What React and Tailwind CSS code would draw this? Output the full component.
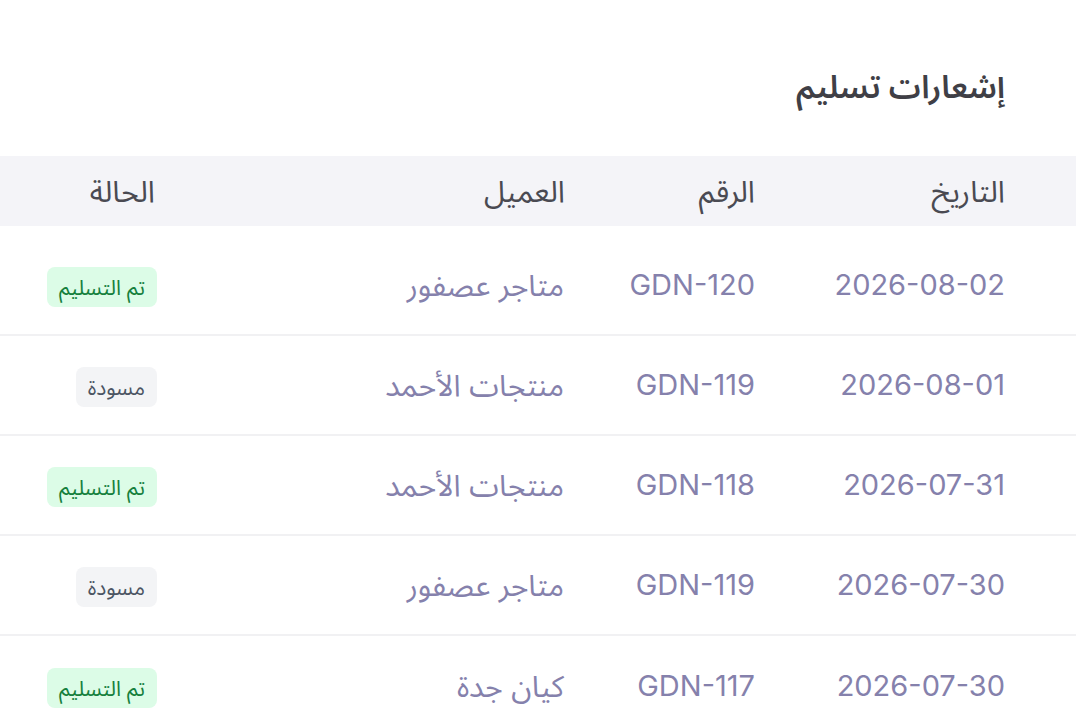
import React from 'react';

const rows = [
  { date: '2026-08-02', no: 'GDN-120', customer: 'متاجر عصفور', status: 'delivered' },
  { date: '2026-08-01', no: 'GDN-119', customer: 'منتجات الأحمد', status: 'draft' },
  { date: '2026-07-31', no: 'GDN-118', customer: 'منتجات الأحمد', status: 'delivered' },
  { date: '2026-07-30', no: 'GDN-119', customer: 'متاجر عصفور', status: 'draft' },
  { date: '2026-07-30', no: 'GDN-117', customer: 'كيان جدة', status: 'delivered' },
];

const font = { fontFamily: 'Inter, "Noto Sans Arabic", "Noto Sans", "DejaVu Sans", sans-serif' };

const StatusBadge = ({ status }) =>
  status === 'delivered' ? (
    <span className="inline-flex items-center h-[40px] px-[12px] rounded-lg bg-[#dcfce7] text-[#15803d] text-[21px]">
      تم التسليم
    </span>
  ) : (
    <span className="inline-flex items-center h-[40px] px-[12px] rounded-lg bg-[#f3f4f6] text-[#4b5563] text-[21px]">
      مسودة
    </span>
  );

const App = () => {
  return (
    <div dir="rtl" className="min-h-screen bg-white" style={font}>
      <h1 className="pt-[60px] pb-[42px] pr-[71px] text-[32px] font-semibold text-[#3f3f46] leading-[54px]">
        إشعارات تسليم
      </h1>

      {/* header */}
      <div className="flex h-[70px] items-center bg-[#f4f4f8] text-[30px] text-[#4a4a52]">
        <div className="w-[296px] pr-[71px]">التاريخ</div>
        <div className="w-[190px] pr-[25px]">الرقم</div>
        <div className="w-[410px] pr-[25px]">العميل</div>
        <div className="flex-1 pr-[25px]">الحالة</div>
      </div>

      <div className="pt-[10px]">
        {rows.map((r, i) => (
          <div
            key={i}
            className={`flex h-[100px] items-center text-[29px] text-[#8581ac] ${
              i < rows.length - 1 ? 'border-b-2 border-[#f1f1f3]' : ''
            }`}
          >
            <div className="w-[296px] pr-[71px]">{r.date}</div>
            <div className="w-[190px] pr-[25px]">{r.no}</div>
            <div className="w-[410px] pr-[26px] text-[30px]">{r.customer}</div>
            <div className="flex-1 pr-[23px]">
              <StatusBadge status={r.status} />
            </div>
          </div>
        ))}
      </div>
    </div>
  );
};

export default App;
